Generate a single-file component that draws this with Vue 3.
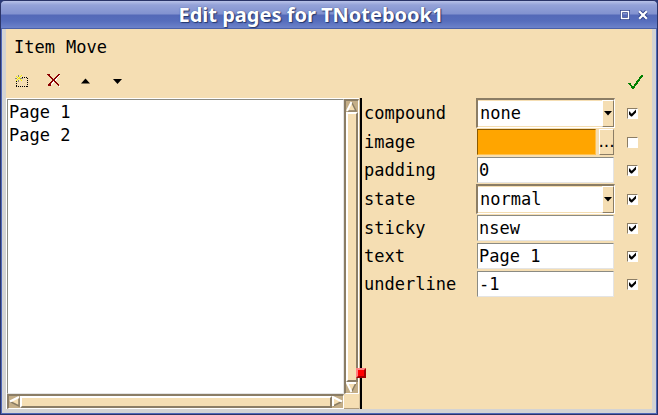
<script setup>
import { ref, reactive } from 'vue'

const pages = ['Page 1', 'Page 2']
const selected = ref('')
const properties = reactive([
  { name: 'compound', kind: 'choice', value: 'none', options: ['none', 'text', 'image', 'center', 'top', 'bottom', 'left', 'right'], on: true },
  { name: 'image', kind: 'image', value: '', on: false },
  { name: 'padding', kind: 'plain', value: '0', on: true },
  { name: 'state', kind: 'choice', value: 'normal', options: ['normal', 'disabled', 'hidden'], on: true },
  { name: 'sticky', kind: 'plain', value: 'nsew', on: true },
  { name: 'text', kind: 'plain', value: 'Page 1', on: true },
  { name: 'underline', kind: 'plain', value: '-1', on: true }
])
</script>

<template>
  <div class="window">
    <header class="titlebar">
      <h1>Edit pages for TNotebook1</h1>
      <div class="window-buttons">
        <button type="button" aria-label="Maximize">
          <svg width="10" height="10" viewBox="0 0 10 10"><rect x="1.5" y="1.5" width="7" height="7" fill="none" stroke="#34468c" stroke-width="3" /><rect x="1.5" y="1.5" width="7" height="7" fill="none" stroke="#fff" stroke-width="1.4" /></svg>
        </button>
        <button type="button" aria-label="Close">
          <svg width="10" height="10" viewBox="0 0 10 10"><path d="M1.5 1.5 8.5 8.5M8.5 1.5 1.5 8.5" stroke="#34468c" stroke-width="4" /><path d="M1.2 1.2 8.8 8.8M8.8 1.2 1.2 8.8" stroke="#fff" stroke-width="2.2" /></svg>
        </button>
      </div>
    </header>

    <main class="body">
      <nav class="menu">
        <button type="button">Item</button>
        <button type="button">Move</button>
      </nav>

      <div class="toolbar">
        <button type="button" aria-label="New page">
          <svg width="16" height="16" viewBox="0 0 16 16" shape-rendering="crispEdges">
            <path d="M8 4.5H14M2 13.5H14" stroke="#000" stroke-dasharray="1 1" />
            <path d="M2.5 8V14M13.5 5V14" stroke="#000" stroke-dasharray="1 1" />
            <path d="M4 2h1v2H4zM1 5h2v1H1zM6 5h3v1H6zM4 7h1v2H4z" fill="#8c8c78" />
            <path d="M2 3h1v1H2zM3 4h1v1H3zM6 3h1v1H6zM7 2h1v1H7zM5 4h1v1H5zM4 5h2v1H4zM3 6h1v1H3zM2 7h1v1H2zM6 6h1v1H6zM7 7h1v1H7z" fill="#f4f000" />
          </svg>
        </button>
        <button type="button" aria-label="Delete page">
          <svg width="16" height="16" viewBox="0 0 16 16" shape-rendering="crispEdges">
            <path d="M3 3 14 14M14 2 4 13" stroke="#fff" />
            <path d="M1 1H4L14 11V12H12L1 2ZM12 1H14V2L5 11V13H2V11Z" fill="none" />
            <path d="M2 1.500 13 12.500M13.500 1 3 12" stroke="#8b0000" stroke-width="1.500" />
            <path d="M1 1H4V3H2ZM2 11H5V13H2Z" fill="#8b0000" />
          </svg>
        </button>
        <button type="button" aria-label="Move up">
          <svg width="16" height="16" viewBox="0 0 16 16"><path d="M3 10.500 7.500 5.500 12 10.500Z" fill="#000" /></svg>
        </button>
        <button type="button" aria-label="Move down">
          <svg width="16" height="16" viewBox="0 0 16 16"><path d="M3 6H12L7.500 11Z" fill="#000" /></svg>
        </button>
        <button type="button" class="apply" aria-label="Apply">
          <svg width="16" height="16" viewBox="0 0 16 16" shape-rendering="crispEdges"><path d="M1 10 5 15 14.500 2" fill="none" stroke="#008000" stroke-width="2" /></svg>
        </button>
      </div>

      <div class="panes">
        <section class="list-pane">
          <ul class="listbox" role="listbox" aria-label="Pages">
            <li v-for="page in pages" :key="page" role="option" :aria-selected="selected === page" @click="selected = page">{{ page }}</li>
          </ul>
          <div class="scroll vertical">
            <svg class="arrow" width="11" height="11" viewBox="0 0 11 11"><rect width="11" height="11" fill="#c4ae88" /><path d="M5.500 1 1 10H10Z" fill="#f5deb3" /><path d="M1 10H10L5.500 1" fill="none" stroke="#8b7d65" stroke-width="1.500" /><path d="M1 10 5.500 1" stroke="#fff" stroke-width="2" /></svg>
            <div class="thumb"></div>
            <svg class="arrow" width="11" height="11" viewBox="0 0 11 11"><rect width="11" height="11" fill="#c4ae88" /><path d="M1 1H10L5.500 10Z" fill="#f5deb3" /><path d="M10 1 5.500 10" stroke="#8b7d65" stroke-width="1.500" /><path d="M10 1H1L5.500 10" fill="none" stroke="#fff" stroke-width="2" /></svg>
          </div>
          <div class="scroll">
            <svg class="arrow" width="11" height="11" viewBox="0 0 11 11"><rect width="11" height="11" fill="#c4ae88" /><path d="M1 5.500 10 1V10Z" fill="#f5deb3" /><path d="M10 1V10L1 5.500" fill="none" stroke="#8b7d65" stroke-width="1.500" /><path d="M1 5.500 10 1" stroke="#fff" stroke-width="2" /></svg>
            <div class="thumb"></div>
            <svg class="arrow" width="11" height="11" viewBox="0 0 11 11"><rect width="11" height="11" fill="#c4ae88" /><path d="M1 1V10L10 5.500Z" fill="#f5deb3" /><path d="M1 10 10 5.500" stroke="#8b7d65" stroke-width="1.500" /><path d="M1 10V1L10 5.500" fill="none" stroke="#fff" stroke-width="2" /></svg>
          </div>
          <div class="corner"></div>
        </section>

        <div class="sash"><span class="handle"></span></div>

        <form class="properties" @submit.prevent>
          <div v-for="prop in properties" :key="prop.name" class="row" :class="{ tall: prop.kind === 'choice' }">
            <label :for="'field-' + prop.name">{{ prop.name }}</label>
            <div v-if="prop.kind === 'choice'" class="combo">
              <select :id="'field-' + prop.name" v-model="prop.value">
                <option v-for="option in prop.options" :key="option">{{ option }}</option>
              </select>
              <span class="drop" aria-hidden="true"><svg width="8" height="5" viewBox="0 0 8 5"><path d="M0 0H8L4 4.500Z" fill="#000" /></svg></span>
            </div>
            <div v-else-if="prop.kind === 'image'" class="image-field">
              <input :id="'field-' + prop.name" v-model="prop.value" class="swatch" type="text">
              <button type="button" class="browse" aria-label="Choose image"><span>...</span></button>
            </div>
            <input v-else :id="'field-' + prop.name" v-model="prop.value" class="entry" type="text">
            <input v-model="prop.on" class="tick" type="checkbox" :aria-label="'Use ' + prop.name">
          </div>
        </form>
      </div>
    </main>
  </div>
</template>

<style>
body {
  margin: 0;
  background: #2a3a78;
}
</style>

<style scoped>
* {
  box-sizing: border-box;
}

.window {
  display: flex;
  flex-direction: column;
  min-height: 100vh;
  border: 1px solid #2a3468;
  border-radius: 5px 5px 0 0;
  background: #5068b8;
  color: #000;
  font: 17px/23px "DejaVu Sans Mono", monospace;
}

button,
input,
select {
  margin: 0;
  padding: 0;
  border: 0;
  border-radius: 0;
  background: none;
  color: inherit;
  font: inherit;
}

.titlebar {
  display: grid;
  grid-template-columns: 1fr auto 1fr;
  align-items: center;
  height: 28px;
  padding: 0 6px;
  border-bottom: 1px solid #4a60a8;
  border-radius: 4px 4px 0 0;
  background: linear-gradient(#b8c2e8 0, #94a2d8 4px, #8292d0 13px, #5469b8 14px, #566dbc 20px, #6c82ca 27px);
}

.titlebar h1 {
  grid-column: 2;
  margin: 0;
  padding-right: 36px;
  color: #fff;
  font: bold 20px/28px "Noto Sans", "Open Sans", sans-serif;
  text-shadow: 0 0 1px #24386e, 1px 1px 1px #24386e;
  white-space: nowrap;
}

.window-buttons {
  display: flex;
  justify-content: flex-end;
  gap: 8px;
  padding-right: 3px;
}

.window-buttons button {
  display: flex;
}

.body {
  display: flex;
  flex: 1;
  flex-direction: column;
  margin: 0 1px 1px;
  border: solid #d3d3d3;
  border-width: 0 4px 4px;
  background: #f5deb3;
}

.menu {
  display: flex;
  gap: 11px;
  padding: 7px 8px 5px;
}

.toolbar {
  display: flex;
  height: 34px;
}

.toolbar button {
  display: flex;
  align-items: center;
  justify-content: center;
  width: 32px;
}

.toolbar .apply {
  margin-left: auto;
}

.panes {
  display: grid;
  flex: 1;
  grid-template-columns: minmax(0, 1fr) 3px 290px;
}

.list-pane {
  display: grid;
  grid-template-columns: minmax(0, 1fr) 15px;
  grid-template-rows: minmax(0, 1fr) 15px;
  border-top: 1px solid #fff;
  border-left: 1px solid #fff;
}

.listbox {
  margin: 0;
  padding: 1px;
  border: 1px solid #8b8b83;
  border-right-color: #e4e4e4;
  border-bottom-color: #e4e4e4;
  background: #fff;
  list-style: none;
}

.scroll {
  display: flex;
  border: 1px solid #fff;
  border-top: 2px solid #8b7d65;
  border-left: 2px solid #8b7d65;
  background: #c4ae88;
}

.vertical {
  flex-direction: column;
}

.arrow {
  flex: none;
}

.thumb {
  flex: 1;
  border: 2px solid #8b7d65;
  border-top-color: #fff;
  border-left-color: #fff;
  background: #f5deb3;
}

.corner {
  border-bottom: 1px solid #b09c7c;
}

.sash {
  position: relative;
  border-left: 1px solid #d8c49e;
  background: #000;
}

.handle {
  position: absolute;
  right: -4px;
  bottom: 31px;
  width: 10px;
  height: 10px;
  border: 2px solid #a00000;
  border-top-color: #ff7f7f;
  border-left-color: #ff7f7f;
  background: #f00;
}

.properties {
  padding-left: 2px;
}

.row {
  display: grid;
  grid-template-columns: 112px minmax(0, 1fr) 37px;
  align-items: center;
  height: 28px;
}

.row.tall {
  height: 30px;
}

.combo {
  position: relative;
  display: flex;
  height: 30px;
  border: 1px solid #fff;
  border-top: 2px solid #8b7d65;
  border-left: 2px solid #8b7d65;
}

.combo select {
  flex: 1;
  min-width: 0;
  padding-left: 2px;
  border: 1px solid #f5deb3;
  border-left: 0;
  background: #fff;
  appearance: none;
}

.drop {
  position: absolute;
  top: 0;
  right: 0;
  bottom: 0;
  display: flex;
  align-items: center;
  justify-content: center;
  width: 12px;
  border: 1px solid #8b7d65;
  border-top-color: #fff;
  border-left-color: #fff;
  background: #f5deb3;
  pointer-events: none;
}

.image-field {
  display: flex;
  gap: 3px;
  margin: 0 1px;
}

.swatch {
  flex: 1;
  min-width: 0;
  height: 26px;
  border: 1px solid #ffc04d;
  border-top-color: #8b5a00;
  border-left-color: #8b5a00;
  background: #ffa500;
}

.browse {
  display: flex;
  justify-content: center;
  width: 15px;
  height: 26px;
  border: 1px solid #8b7d65;
  border-top-color: #fff;
  border-left-color: #fff;
  font: 17px/23px "DejaVu Sans", sans-serif;
}

.entry {
  min-width: 0;
  height: 26px;
  margin: 0 1px;
  padding-left: 1px;
  border: 1px solid #e4e4e4;
  border-top-color: #8b8b83;
  border-left-color: #8b8b83;
  background: #fff;
}

.tick {
  justify-self: start;
  width: 11px;
  height: 11px;
  margin-left: 12px;
  border: 1px solid #fff;
  border-top-color: #8b7d65;
  border-left-color: #8b7d65;
  background: #fff;
  appearance: none;
}

.tick:checked::after {
  display: block;
  width: 9px;
  height: 9px;
  background: #000;
  clip-path: polygon(1px 3px, 2px 3px, 3px 5px, 4px 5px, 8px 1px, 8px 4px, 4px 8px, 3px 8px, 1px 6px);
  content: "";
}
</style>
